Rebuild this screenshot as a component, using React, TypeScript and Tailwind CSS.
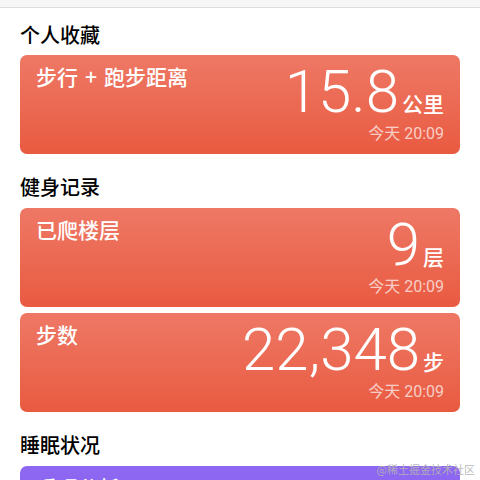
import React from "react";

function Heading({ children, first }: { children: React.ReactNode; first?: boolean }) {
  return (
    <div
      className={`${first ? "mt-[14px] mb-[7px]" : "mt-[20px] mb-[8px]"} font-['Noto_Sans_CJK_SC',sans-serif] text-[20px] leading-[26px] font-medium text-black`}
    >
      {children}
    </div>
  );
}

function Card({ title, value, unit }: { title: React.ReactNode; value: string; unit: string }) {
  return (
    <div className="h-[99px] rounded-[7px] bg-linear-to-b from-[#ee7865] to-[#e95a40] px-4 pt-[7px] flex justify-between">
      <div className="font-['Noto_Sans_CJK_SC',sans-serif] text-[21px] leading-[28px] font-medium text-white">
        {title}
      </div>
      <div className="flex flex-col items-end">
        <div className="flex items-baseline text-white">
          <span className="font-['Roboto',sans-serif] text-[60px] leading-[60px] font-light">{value}</span>
          <span className="ml-[3px] font-['Noto_Sans_CJK_SC',sans-serif] text-[21px] leading-[26px] font-medium">
            {unit}
          </span>
        </div>
        <div className="mt-[3px] font-['Roboto','Noto_Sans_CJK_SC',sans-serif] text-[16px] leading-[18px] text-white/70">
          今天 20:09
        </div>
      </div>
    </div>
  );
}

export default function App() {
  return (
    <div className="relative w-[480px] h-[480px] overflow-hidden bg-white">
      <div className="h-[8px] bg-[#f6f6f6] border-b border-[#dcdcdc]" />
      <div className="px-5">
        <Heading first>个人收藏</Heading>
        <Card
          title={
            <>
              步行<span className="mx-[7px]">+</span>跑步距离
            </>
          }
          value="15.8"
          unit="公里"
        />
        <Heading>健身记录</Heading>
        <div className="flex flex-col gap-[6px]">
          <Card title="已爬楼层" value="9" unit="层" />
          <Card title="步数" value="22,348" unit="步" />
        </div>
        <Heading>睡眠状况</Heading>
        <div className="h-[99px] rounded-[7px] bg-linear-to-b from-[#8f68f2] to-[#7c55e6] px-4 pt-[7px] flex justify-between">
          <div className="font-['Noto_Sans_CJK_SC',sans-serif] text-[21px] leading-[28px] font-medium text-white">
            睡眠分析
          </div>
          <div className="flex items-baseline text-white">
            <span className="font-['Roboto',sans-serif] text-[60px] leading-[60px] font-light">8</span>
            <span className="ml-[3px] font-['Noto_Sans_CJK_SC',sans-serif] text-[21px] leading-[26px] font-medium">
              小时
            </span>
            <span className="ml-[6px] font-['Roboto',sans-serif] text-[60px] leading-[60px] font-light">9</span>
            <span className="ml-[3px] font-['Noto_Sans_CJK_SC',sans-serif] text-[21px] leading-[26px] font-medium">
              分
            </span>
          </div>
        </div>
      </div>
      <div className="absolute right-[5px] bottom-[4px] font-['Noto_Sans_CJK_SC',sans-serif] text-[11px] leading-[14px] text-[#b4b4b4]/90">
        @稀土掘金技术社区
      </div>
    </div>
  );
}
